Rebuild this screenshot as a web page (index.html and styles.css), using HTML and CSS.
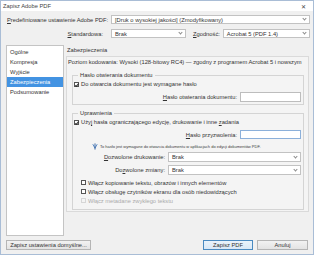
FILE: index.html
```html
<!DOCTYPE html>
<html lang="pl">
<head>
<meta charset="utf-8">
<title>Zapisz Adobe PDF</title>
<link rel="stylesheet" href="styles.css">
</head>
<body>
<div class="win">
  <div class="titlebar">
    <span class="title">Zapisz Adobe PDF</span>
    <span class="close">✕</span>
  </div>
  <div class="content">
    <div class="row r1">
      <span class="lbl"><u>P</u>redefiniowane ustawienie Adobe PDF:</span>
      <div class="select grow"><span>[Druk o wysokiej jakości] (Zmodyfikowany)</span><i class="chev"></i></div>
    </div>
    <div class="row r2">
      <span class="lbl"><u>S</u>tandardowa:</span>
      <div class="select s-std"><span>Brak</span><i class="chev"></i></div>
      <span class="lbl2"><u>Z</u>godność:</span>
      <div class="select grow"><span>Acrobat 5 (PDF 1.4)</span><i class="chev"></i></div>
    </div>
    <div class="main">
      <ul class="nav">
        <li>Ogólne</li>
        <li>Kompresja</li>
        <li>Wyjście</li>
        <li class="sel">Zabezpieczenia</li>
        <li>Podsumowanie</li>
      </ul>
      <div class="pane">
        <div class="pane-title">Zabezpieczenia</div>
        <div class="pane-box">
          <p class="level">Poziom kodowania: Wysoki (128-bitowy RC4) — zgodny z programem Acrobat 5 i nowszym</p>
          <div class="group g1">
            <div class="legend">Hasło otwierania dokumentu</div>
            <label class="chk first"><i class="box on"></i><span>Do otwarcia dokumentu jest wymagane hasło</span></label>
            <div class="frow f-pass1">
              <span><u>H</u>asło otwierania dokumentu:</span>
              <div class="input"></div>
            </div>
          </div>
          <div class="group g2">
            <div class="legend">Uprawnienia</div>
            <label class="chk first"><i class="box on"></i><span>Uży<u>j</u> hasła ograniczającego edycję, drukowanie i inne <u>z</u>adania</span></label>
            <div class="frow f-pass2">
              <span><u>H</u>asło przyzwolenia:</span>
              <div class="input focus"></div>
            </div>
            <div class="info">
              <svg class="ico" width="6" height="7" viewBox="0 0 6 7"><path d="M0.8 1.2 L3 5.2 L5.2 1.2" fill="none" stroke="#4a7fc0" stroke-width="0.9"/><path d="M3 0.4 V6.6" stroke="#2f5f9e" stroke-width="0.9"/></svg>
              <span>To hasło jest wymagane do otwarcia dokumentu w aplikacjach do edycji dokumentów PDF.</span>
            </div>
            <div class="frow f-sel1">
              <span><u>D</u>ozwolone drukowanie:</span>
              <div class="select s-perm"><span>Brak</span><i class="chev"></i></div>
            </div>
            <div class="frow f-sel2">
              <span>Do<u>z</u>wolone zmiany:</span>
              <div class="select s-perm"><span>Brak</span><i class="chev"></i></div>
            </div>
            <label class="chk sub c1"><i class="box"></i><span>Włącz kopiowanie tekstu, obrazów i innych elementów</span></label>
            <label class="chk sub"><i class="box"></i><span>Włącz obsługę czytników ekranu dla osób niedowidzących</span></label>
            <label class="chk sub dis"><i class="box"></i><span>Włącz metadane zwykłego tekstu</span></label>
          </div>
        </div>
      </div>
    </div>
    <div class="footer">
      <div class="btn b-def">Zapisz ustawienia domyślne...</div>
      <div class="spacer"></div>
      <div class="btn b-save">Zapisz PDF</div>
      <div class="btn b-cancel">Anuluj</div>
    </div>
  </div>
</div>
</body>
</html>
```

FILE: styles.css
```css
* {
  box-sizing: border-box;
  margin: 0;
  padding: 0;
}

html, body {
  margin: 0;
  width: 314px;
  height: 255px;
  overflow: hidden;
  background: #ffffff;
}

body {
  font-family: "Liberation Sans", Arial, sans-serif;
  font-size: 5.75px;
  color: #333333;
}

u {
  text-decoration: underline;
  text-decoration-thickness: 0.5px;
  text-underline-offset: 1px;
}

.win {
  width: 314px;
  height: 255px;
  border: 1px solid #a9bdd6;
  background: #f0f0f0;
  display: flex;
  flex-direction: column;
}

.titlebar {
  height: 10px;
  flex: none;
  background: #ffffff;
  display: flex;
  align-items: center;
  justify-content: space-between;
  padding: 0 7px 0 2px;
  color: #444444;
}

.close {
  font-size: 6px;
  color: #444;
}

.content {
  flex: 1;
  display: flex;
  flex-direction: column;
  padding: 4px 3px 3px 5px;
}

.row {
  display: flex;
  align-items: center;
  height: 9px;
}

.r2 {
  margin-top: 5px;
}

.lbl {
  width: 96px;
  flex: none;
  text-align: right;
  white-space: nowrap;
  margin-left: 1px;
}

.lbl2 {
  margin-left: 7px;
  margin-right: 3px;
  white-space: nowrap;
}

.select {
  height: 9px;
  background: #ffffff;
  border: 1px solid #c2c2c2;
  display: flex;
  align-items: center;
  justify-content: space-between;
  padding: 0 3px 0 3px;
  white-space: nowrap;
  overflow: hidden;
}

.r1 .select,
.r2 .select.s-std {
  margin-left: 8px;
}

.grow {
  flex: 1;
}

.s-std {
  width: 75px;
  flex: none;
}

.chev {
  width: 3px;
  height: 3px;
  border-right: 0.7px solid #8a8a8a;
  border-bottom: 0.7px solid #8a8a8a;
  transform: translateY(-1px) rotate(45deg);
  flex: none;
}

.main {
  margin-top: 7px;
  display: flex;
  height: 191px;
}

.nav {
  list-style: none;
  width: 58px;
  flex: none;
  height: 191px;
  background: #ffffff;
  border: 1px solid #c4c4c4;
  padding-top: 1px;
}

.nav li {
  height: 10px;
  line-height: 10px;
  padding-left: 3px;
  white-space: nowrap;
}

.nav li.sel {
  background: #4393e2;
  color: #ffffff;
}

.pane {
  flex: 1;
  margin-left: 2px;
  margin-right: 1px;
  display: flex;
  flex-direction: column;
}

.pane-title {
  height: 11px;
  line-height: 10px;
  padding-left: 1px;
}

.pane-box {
  height: 156px;
  border: 1px solid #dadada;
  background: #f4f4f4;
  padding: 2px 4px 0 1px;
}

.level {
  line-height: 7px;
  white-space: nowrap;
}

.group {
  border: 1px solid #d4d4d4;
  margin-left: 4px;
  padding: 0 2px 2px 1px;
}

.g1 {
  margin-top: 9px;
  height: 30px;
}

.g2 {
  margin-top: 8px;
  height: 97px;
}

.legend {
  width: fit-content;
  margin: -4px 0 0 4px;
  padding: 0 2px;
  line-height: 7px;
  background: #f4f4f4;
}

.chk {
  display: flex;
  align-items: center;
  height: 8px;
  white-space: nowrap;
}

.chk.first {
  margin-top: 1px;
}

.box {
  width: 5px;
  height: 5px;
  border: 0.8px solid #555555;
  background: #ffffff;
  margin-right: 2px;
  flex: none;
  position: relative;
}

.box.on::after {
  content: "";
  position: absolute;
  left: 1px;
  top: 0px;
  width: 1.4px;
  height: 2.6px;
  border-right: 0.8px solid #333;
  border-bottom: 0.8px solid #333;
  transform: rotate(40deg);
}

.chk.sub {
  height: 9px;
  padding-left: 7px;
}

.chk.sub.c1 {
  margin-top: 3px;
}

.chk.dis {
  color: #ababab;
}

.chk.dis .box {
  border-color: #d6d6d6;
  background: transparent;
}

.frow {
  display: flex;
  align-items: center;
  justify-content: flex-end;
  gap: 3px;
  white-space: nowrap;
}

.input {
  width: 61px;
  height: 10px;
  background: #ffffff;
  border: 1px solid #bdbdbd;
}

.input.focus {
  height: 9px;
  border-color: #8cb0da;
}

.f-pass1 {
  margin-top: 4px;
}

.f-pass2 {
  margin-top: 4px;
}

.info {
  display: flex;
  align-items: center;
  height: 8px;
  margin-top: 3px;
  padding-left: 18px;
  font-size: 4px;
  white-space: nowrap;
  color: #3a3a3a;
}

.ico {
  margin-right: 2px;
  flex: none;
}

.f-sel1 {
  margin-top: 2px;
}

.f-sel2 {
  margin-top: 3px;
}

.s-perm {
  width: 133px;
  height: 10px;
}

.footer {
  margin-top: 4px;
  display: flex;
  height: 10px;
}

.spacer {
  flex: 1;
}

.btn {
  height: 10px;
  border: 1px solid #b5b5b5;
  background: linear-gradient(#f2f2f2, #e3e3e3);
  display: flex;
  align-items: center;
  justify-content: center;
  white-space: nowrap;
}

.b-def {
  width: 85px;
}

.b-save {
  width: 50px;
  border-color: #4a8ac0;
  background: linear-gradient(#eaf3fb, #d9e8f6);
}

.b-cancel {
  width: 51px;
  margin-left: 4px;
  margin-right: 2px;
}
```
